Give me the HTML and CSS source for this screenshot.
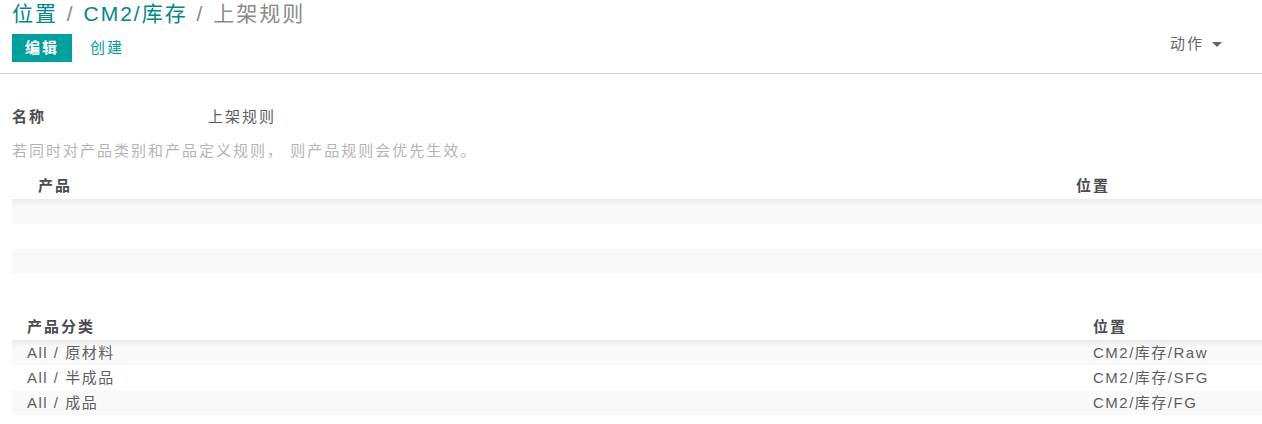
FILE: index.html
```html
<!doctype html>
<html>
	<head>
		<meta charset="utf-8">
		<title>上架规则</title>
		<link rel="stylesheet" href="styles.css">
	</head>
	<body>
		<div class="control-panel">
			<div class="breadcrumb">
				<a class="crumb-link">位置</a>
				<span class="crumb-sep">/</span>
				<a class="crumb-link">CM2/库存</a>
				<span class="crumb-sep">/</span>
				<span class="crumb-active">上架规则</span>
			</div>
			<div class="cp-bottom">
				<div class="cp-buttons">
					<button type="button" class="btn btn-primary">编辑</button>
					<button type="button" class="btn btn-link">创建</button>
				</div>
				<div class="cp-sidebar">
					<span>动作</span>
					<span class="caret"></span>
				</div>
			</div>
		</div>
		<div class="form">
			<div class="field-row">
				<span class="field-label">名称</span>
				<span class="field-value">上架规则</span>
			</div>
			<p class="help">若同时对产品类别和产品定义规则， 则产品规则会优先生效。</p>

			<table class="list list-handle">
				<colgroup>
					<col class="col-handle">
					<col>
					<col class="col-loc-a">
				</colgroup>
				<thead>
					<tr>
						<th class="handle"></th>
						<th>产品</th>
						<th>位置</th>
					</tr>
				</thead>
				<tbody>
					<tr><td class="handle"></td><td></td><td></td></tr>
					<tr><td class="handle"></td><td></td><td></td></tr>
					<tr><td class="handle"></td><td></td><td></td></tr>
				</tbody>
			</table>

			<table class="list list-categ">
				<colgroup>
					<col>
					<col class="col-loc-b">
				</colgroup>
				<thead>
					<tr>
						<th>产品分类</th>
						<th>位置</th>
					</tr>
				</thead>
				<tbody>
					<tr><td>All / 原材料</td><td>CM2/库存/Raw</td></tr>
					<tr><td>All / 半成品</td><td>CM2/库存/SFG</td></tr>
					<tr><td>All / 成品</td><td>CM2/库存/FG</td></tr>
				</tbody>
			</table>
		</div>
	</body>
</html>
```

FILE: styles.css
```css
body {
	margin: 0;
	background: #fff;
	color: #5e5e5e;
	font: 15px "Liberation Sans", "Noto Sans CJK SC", sans-serif;
	letter-spacing: 2px;
}
.control-panel {
	padding: 0 0 11px 12px;
	border-bottom: 1px solid #d2d2d2;
}
.breadcrumb {
	font-size: 21px;
	line-height: 28px;
	white-space: nowrap;
}
.crumb-link {
	color: #00878a;
	cursor: pointer;
}
.crumb-sep {
	color: #888;
	margin: 0 1px;
}
.crumb-active {
	color: #8a8a8a;
}
.cp-bottom {
	display: flex;
	justify-content: space-between;
	align-items: flex-start;
	margin-top: 6px;
}
.cp-buttons {
	display: flex;
}
.btn {
	height: 28px;
	padding: 0 13px;
	border: 0;
	font: inherit;
	letter-spacing: 2px;
	line-height: 28px;
	cursor: pointer;
}
.btn-primary {
	width: 60px;
	padding: 0;
	background: #00a09d;
	color: #fff;
	font-weight: bold;
}
.btn-link {
	margin-left: 5px;
	background: none;
	color: #00a09d;
}
.cp-sidebar {
	display: flex;
	align-items: center;
	margin-right: 40px;
	line-height: 20px;
	color: #666;
}
.caret {
	width: 0;
	height: 0;
	margin-left: 8px;
	border-top: 5px solid #666;
	border-left: 5px solid transparent;
	border-right: 5px solid transparent;
}
.form {
	padding: 33px 0 0 12px;
}
.field-row {
	display: flex;
	line-height: 20px;
}
.field-label {
	width: 196px;
	font-weight: bold;
	color: #4c4c4c;
}
.field-value {
	color: #5e5e5e;
}
.help {
	margin: 14px 0 12px;
	line-height: 20px;
	color: #b4b4b4;
}
.list {
	width: 100%;
	border-collapse: collapse;
	table-layout: fixed;
}
.list th {
	box-sizing: border-box;
	height: 26px;
	padding: 0 0 3px 16px;
	text-align: left;
	font-weight: bold;
	color: #4c4c4c;
}
.list td {
	box-sizing: border-box;
	height: 25px;
	padding: 0 0 2px 16px;
	letter-spacing: 1.5px;
	white-space: nowrap;
}
.list tbody tr:nth-child(odd) {
	background: #f9f9f9;
}
.list tbody tr:first-child td {
	background: linear-gradient(#ebebeb, #f9f9f9 7px);
}
.list .handle {
	padding: 0;
}
.col-handle {
	width: 10px;
}
.col-loc-a {
	width: 202px;
}
.list-categ {
	margin-top: 40px;
}
.list-categ th:first-child,
.list-categ td:first-child {
	padding-left: 15px;
}
.col-loc-b {
	width: 185px;
}
```
